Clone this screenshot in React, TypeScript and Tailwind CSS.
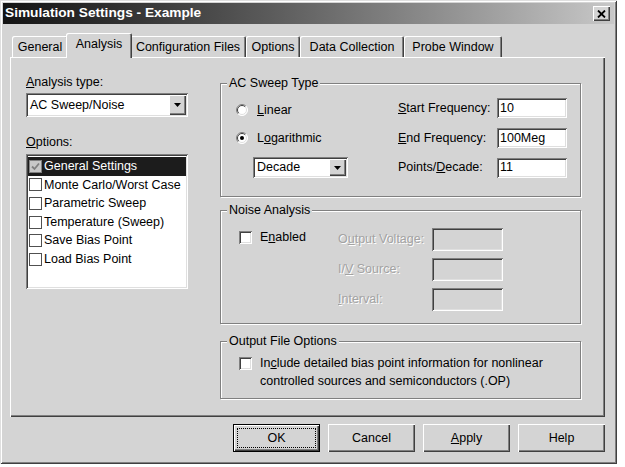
import React from "react";

const raised =
  "shadow-[inset_1px_1px_0_#ffffff,inset_-1px_-1px_0_#404040,inset_-2px_-2px_0_#808080]";
const sunken =
  "shadow-[inset_1px_1px_0_#808080,inset_-1px_-1px_0_#ffffff,inset_2px_2px_0_#404040,inset_-2px_-2px_0_#dfdfdf]";

const tabs = [
  { label: "General", cls: "w-[56px]" },
  { label: "Analysis", cls: "w-[66px]", active: true },
  { label: "Configuration Files", cls: "w-[116px]" },
  { label: "Options", cls: "w-[54px]" },
  { label: "Data Collection", cls: "w-[104px]" },
  { label: "Probe Window", cls: "w-[98px]" },
];

const options = [
  "General Settings",
  "Monte Carlo/Worst Case",
  "Parametric Sweep",
  "Temperature (Sweep)",
  "Save Bias Point",
  "Load Bias Point",
];

const Arrow = () => (
  <svg width="7" height="4" viewBox="0 0 7 4">
    <path d="M0 0h7L3.5 4z" fill="#000" />
  </svg>
);

const Combo = ({ value, className }: { value: string; className: string }) => (
  <div className={`flex items-stretch bg-white ${sunken} ${className}`}>
    <span className="flex flex-1 items-center pl-[4px]">{value}</span>
    <span
      className={`m-[2px] flex w-[17px] items-center justify-center bg-[#d4d4d4] ${raised}`}
    >
      <Arrow />
    </span>
  </div>
);

const Radio = ({ checked, children, className = "" }: { checked?: boolean; children: React.ReactNode; className?: string }) => (
  <div className={`flex h-[20px] items-center gap-[9px] ${className}`}>
    <svg width="12" height="12" viewBox="0 0 12 12">
      <circle cx="6" cy="6" r="5.5" fill="#ffffff" />
      <path d="M2.1 9.9A5.5 5.5 0 0 1 9.9 2.1" stroke="#808080" fill="none" />
      <path d="M9.9 2.1A5.5 5.5 0 0 1 2.1 9.9" stroke="#ffffff" fill="none" />
      <path d="M2.8 9.2A4.5 4.5 0 0 1 9.2 2.8" stroke="#404040" fill="none" />
      <path d="M9.2 2.8A4.5 4.5 0 0 1 2.8 9.2" stroke="#dfdfdf" fill="none" />
      {checked && <circle cx="6" cy="6" r="2" fill="#000000" />}
    </svg>
    <span>{children}</span>
  </div>
);

const Check = ({ className = "" }: { className?: string }) => (
  <span className={`block h-[13px] w-[13px] shrink-0 bg-white ${sunken} ${className}`} />
);

const Group = ({ title, className, children }: { title: string; className: string; children: React.ReactNode }) => (
  <div
    className={`relative border border-[#808080] shadow-[inset_1px_1px_0_#ffffff,1px_1px_0_#ffffff] ${className}`}
  >
    <span className="absolute -top-[9px] left-[6px] bg-[#d4d4d4] px-[2px] leading-[16px]">
      {title}
    </span>
    {children}
  </div>
);

const Field = ({ value, disabled }: { value?: string; disabled?: boolean }) => (
  <div
    className={`flex items-center pl-[3px] ${sunken} ${disabled ? "h-[23px] bg-[#d4d4d4]" : "h-[20px] bg-white"}`}
  >
    {value}
  </div>
);

const dim = "text-[#a3a3a3] [text-shadow:1px_1px_0_#ffffff]";

export default function App() {
  return (
    <div className="h-[467px] w-[625px] bg-white font-['Liberation_Sans',Arial,sans-serif] text-[12.5px] text-black">
      <div className="flex h-[464px] w-[617px] flex-col bg-[#d4d4d4] p-[3px] shadow-[inset_1px_1px_0_#dfdfdf,inset_-1px_-1px_0_#404040,inset_2px_2px_0_#ffffff,inset_-2px_-2px_0_#808080]">
        {/* title bar */}
        <div className="flex h-[21px] items-center justify-between bg-linear-to-r from-[#141414] to-[#c8c8c8] pl-[2px] pr-[4px]">
          <span className="text-[13.7px] font-bold text-white">Simulation Settings - Example</span>
          <button className={`flex h-[15px] w-[17px] items-center justify-center bg-[#d4d4d4] ${raised}`}>
            <svg width="9" height="8" viewBox="0 0 9 8">
              <path d="M1 0.5L8 7.5M8 0.5L1 7.5" stroke="#000" strokeWidth="1.8" />
            </svg>
          </button>
        </div>

        <div className="flex flex-1 flex-col pl-[7px] pr-[9px] pt-[9px]">
          {/* tabs */}
          <div className="flex h-[24px] items-end pl-[2px]">
            {tabs.map((t) =>
              t.active ? (
                <div
                  key={t.label}
                  className={`relative z-10 -mx-[2px] -mb-px flex h-[25px] items-center justify-center rounded-t-[2px] bg-[#d4d4d4] pb-[2px] shadow-[inset_1px_1px_0_#ffffff,inset_-1px_0_0_#404040,inset_-2px_0_0_#808080] ${t.cls}`}
                >
                  {t.label}
                </div>
              ) : (
                <div
                  key={t.label}
                  className={`flex h-[21px] items-center justify-center rounded-t-[2px] pt-[2px] shadow-[inset_1px_1px_0_#ffffff,inset_-1px_0_0_#404040,inset_-2px_0_0_#808080] ${t.cls}`}
                >
                  {t.label}
                </div>
              )
            )}
          </div>

          {/* panel */}
          <div className={`flex h-[360px] bg-[#d4d4d4] ${raised}`}>
            {/* left column */}
            <div className="ml-[16px] w-[162px] pt-[17px]">
              <div className="leading-[16px]">
                <span className="underline">A</span>nalysis type:
              </div>
              <Combo value="AC Sweep/Noise" className="mt-[3px] h-[24px]" />
              <div className="mt-[17px] leading-[16px]">
                <span className="underline">O</span>ptions:
              </div>
              <div className={`mt-[4px] h-[135px] bg-white px-[2px] pt-[3px] ${sunken}`}>
                {options.map((o, i) => (
                  <div
                    key={o}
                    className={`flex h-[18.6px] items-center gap-[2px] pl-[1px] ${i === 0 ? "bg-[#1c1c1c] text-white" : ""}`}
                  >
                    {i === 0 ? (
                      <span className="flex h-[13px] w-[13px] items-center justify-center border border-[#808080] bg-[#c8c8c8]">
                        <svg width="9" height="9" viewBox="0 0 9 9">
                          <path d="M1 4.5L3.5 7L8 1.5" stroke="#808080" strokeWidth="1.8" fill="none" />
                        </svg>
                      </span>
                    ) : (
                      <span className="block h-[13px] w-[13px] border border-[#505050] bg-white" />
                    )}
                    <span className="whitespace-nowrap">{o}</span>
                  </div>
                ))}
              </div>
            </div>

            {/* right column */}
            <div className="ml-[32px] w-[361px] pt-[26px]">
              <Group title="AC Sweep Type" className="h-[114px]">
                <div className="flex pl-[15px]">
                  <div className="flex w-[162px] flex-col pt-[16px]">
                    <Radio>
                      <span className="underline">L</span>inear
                    </Radio>
                    <Radio checked className="mt-[8px]">
                      L<span className="underline">o</span>garithmic
                    </Radio>
                    <Combo value="Decade" className="ml-[17px] mt-[9px] h-[21px] w-[95px]" />
                  </div>
                  <div className="grid grid-cols-[99px_70px] items-center gap-y-[9px] pt-[14px]">
                    <span>
                      <span className="underline">S</span>tart Frequency:
                    </span>
                    <Field value="10" />
                    <span>
                      <span className="underline">E</span>nd Frequency:
                    </span>
                    <Field value="100Meg" />
                    <span>
                      Points/<span className="underline">D</span>ecade:
                    </span>
                    <Field value="11" />
                  </div>
                </div>
              </Group>

              <Group title="Noise Analysis" className="mt-[13px] h-[114px]">
                <div className="flex">
                  <div className="mt-[18px] flex h-[16px] w-[117px] items-center gap-[8px] pl-[18px]">
                    <Check />
                    <span>
                      E<span className="underline">n</span>abled
                    </span>
                  </div>
                  <div className="grid grid-cols-[94px_71px] items-center gap-y-[7px] pt-[17px]">
                    <span className={dim}>
                      O<span className="underline">u</span>tput Voltage:
                    </span>
                    <Field disabled />
                    <span className={dim}>
                      I/<span className="underline">V</span> Source:
                    </span>
                    <Field disabled />
                    <span className={dim}>
                      <span className="underline">I</span>nterval:
                    </span>
                    <Field disabled />
                  </div>
                </div>
              </Group>

              <Group title="Output File Options" className="mt-[17px] h-[58px]">
                <div className="flex items-start gap-[8px] pl-[18px] pt-[12px]">
                  <Check className="mt-[3px]" />
                  <p className="whitespace-nowrap leading-[18px]">
                    In<span className="underline">c</span>lude detailed bias point information for nonlinear
                    <br />
                    controlled sources and semiconductors (.OP)
                  </p>
                </div>
              </Group>
            </div>
          </div>

          {/* buttons */}
          <div className="mt-[7px] flex justify-end gap-[8px]">
            <button className="h-[28px] w-[87px] p-[4px] shadow-[inset_0_0_0_1px_#000000,inset_2px_2px_0_#ffffff,inset_-2px_-2px_0_#404040,inset_-3px_-3px_0_#808080]">
              <span className="flex h-full w-full items-center justify-center border border-dotted border-black">
                OK
              </span>
            </button>
            <button className={`h-[28px] w-[87px] ${raised}`}>Cancel</button>
            <button className={`h-[28px] w-[87px] ${raised}`}>
              <span className="underline">A</span>pply
            </button>
            <button className={`h-[28px] w-[87px] ${raised}`}>Help</button>
          </div>
        </div>
      </div>
    </div>
  );
}
